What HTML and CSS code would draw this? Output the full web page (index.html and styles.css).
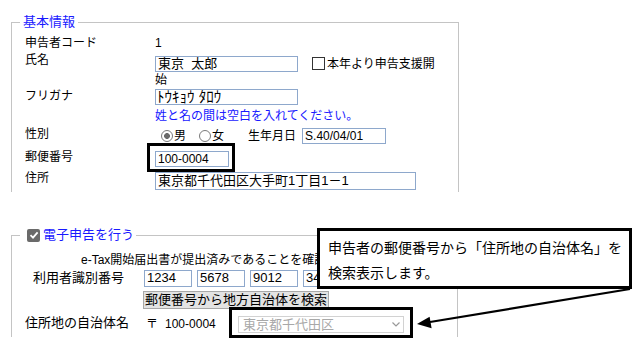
FILE: index.html
```html
<!DOCTYPE html>
<html lang="ja">
  <head>
    <meta charset="UTF-8" />
    <title>申告者情報</title>
    <link rel="stylesheet" href="styles.css">
  </head>
  <body>
    <div class="page">
      <fieldset class="box basic">
        <legend>基本情報</legend>
        <div class="row r-code">
          <span class="lbl">申告者コード</span>
          <div class="fld">1</div>
        </div>
        <div class="row r-name">
          <span class="lbl">氏名</span>
          <div class="fld"><span class="txt w-name">東京&nbsp;&nbsp;太郎</span><span class="chk"></span>本年より申告支援開始</div>
        </div>
        <div class="row r-kana">
          <span class="lbl">フリガナ</span>
          <div class="fld"><span class="txt w-name kana">ﾄｳｷｮｳ ﾀﾛｳ</span></div>
        </div>
        <div class="row r-note">
          <span class="lbl"></span>
          <div class="fld note">姓と名の間は空白を入れてください。</div>
        </div>
        <div class="row r-sex">
          <span class="lbl">性別</span>
          <div class="fld">
            <span class="radio on"></span>男
            <span class="radio"></span>女
            <span class="birth">生年月日</span><span class="txt w-birth">S.40/04/01</span>
          </div>
        </div>
        <div class="row r-zip">
          <span class="lbl">郵便番号</span>
          <div class="fld"><span class="mark mark-zip"><span class="txt w-zip">100-0004</span></span></div>
        </div>
        <div class="row r-addr">
          <span class="lbl">住所</span>
          <div class="fld"><span class="txt w-addr">東京都千代田区大手町1丁目1－1</span></div>
        </div>
      </fieldset>

      <fieldset class="box etax">
        <legend><span class="chk on"><svg viewBox="0 0 12 12" width="12" height="12"><path d="M2.5 6.2 L5 8.6 L9.6 3.4" fill="none" stroke="#fff" stroke-width="1.8"/></svg></span>電子申告を行う</legend>
        <div class="etax-note">e-Tax開始届出書が提出済みであることを確認してください。</div>
        <div class="row r-ids">
          <span class="lbl">利用者識別番号</span>
          <div class="fld">
            <span class="txt w-id">1234</span><span class="txt w-id">5678</span><span class="txt w-id">9012</span><span class="txt w-id">3456</span>
          </div>
        </div>
        <div class="row r-btn">
          <span class="lbl"></span>
          <div class="fld"><button type="button">郵便番号から地方自治体を検索</button></div>
        </div>
        <div class="row r-city">
          <span class="lbl">住所地の自治体名</span>
          <div class="fld">
            <span class="zip-mark">〒</span><span class="zip-no">100-0004</span>
            <span class="mark mark-city"><span class="select">東京都千代田区<svg class="chev" viewBox="0 0 8 5" width="8" height="5"><path d="M0.5 0.5 L4 4 L7.5 0.5" fill="none" stroke="#999" stroke-width="1.2"/></svg></span></span>
          </div>
        </div>
      </fieldset>

      <div class="callout">申告者の郵便番号から「住所地の自治体名」を<br>検索表示します。</div>
      <svg class="arrow" width="637" height="352" viewBox="0 0 637 352">
        <line x1="630" y1="289" x2="430" y2="322" stroke="#000" stroke-width="2.2"/>
        <polygon points="417,324 431.6,328.2 429.6,316.8" fill="#000"/>
      </svg>
    </div>
  </body>
</html>
```

FILE: styles.css
```css
body {
  margin: 0;
  background-color: #fff;
}

.page {
  position: relative;
  width: 637px;
  height: 352px;
  overflow: hidden;
  font-family: "Liberation Sans", "Noto Sans CJK JP", sans-serif;
  font-size: 12px;
  color: #000;
}

/* fieldsets */
.box {
  width: 448px;
  box-sizing: border-box;
  margin: 0 0 0 11px;
  border: 1px solid #c4c4c4;
  border-bottom: none;
  padding: 0 14px 2px 13px;
}

.box legend {
  margin-left: -5px;
  padding: 0 3px;
  font-size: 13px;
  line-height: 16px;
  color: #1919ff;
}

.basic {
  margin-top: 14px;
  height: 178px;
}

.etax {
  margin-top: 35px;
  width: 447px;
}

.etax legend {
  display: flex;
  align-items: center;
  padding: 0 2px 0 3px;
}

/* rows */
.row {
  display: flex;
  align-items: flex-start;
}

.lbl {
  flex: none;
  width: 130px;
  line-height: 16px;
  white-space: nowrap;
}

.fld {
  flex: 1;
  line-height: 16px;
}

.r-code {
  margin-top: 5px;
  height: 17px;
}

.r-name {
  height: 36px;
}

.r-name .fld {
  padding-top: 4px;
  padding-right: 2px;
}

.r-kana {
  height: 17px;
}

.r-kana .fld {
  padding-top: 1px;
}

.r-note {
  height: 19px;
}

.note {
  padding-top: 3px;
  color: #1919ff;
}

.r-sex {
  height: 20px;
}

.r-sex .lbl {
  padding-top: 2px;
}

.r-sex .fld {
  display: flex;
  align-items: center;
  padding-top: 4px;
}

.r-zip {
  height: 23px;
}

.r-zip .lbl {
  padding-top: 5px;
}

.r-zip .fld {
  padding-top: 7px;
}

.r-addr .lbl {
  padding-top: 3px;
}

.r-addr .fld {
  padding-top: 5px;
}

/* text boxes */
.txt {
  display: inline-block;
  box-sizing: border-box;
  height: 16px;
  border: 1px solid #8ea8cc;
  padding: 0 2px;
  line-height: 14px;
  vertical-align: top;
  white-space: nowrap;
  overflow: hidden;
  background-color: #fff;
}

.w-name {
  width: 143px;
  margin-right: 14px;
  font-size: 13px;
}

.kana {
  padding-left: 1px;
  font-size: 15px;
}

.w-birth {
  width: 84px;
}

.w-zip {
  width: 74px;
}

.w-addr {
  width: 261px;
  height: 18px;
  line-height: 16px;
  font-size: 13px;
}

.w-id {
  width: 48px;
  height: 17px;
  margin-right: 5px;
  font-size: 13px;
}

/* checkbox and radio */
.chk {
  display: inline-block;
  box-sizing: border-box;
  width: 13px;
  height: 13px;
  margin: 1px 2px 0 0;
  border: 1px solid #333;
  vertical-align: top;
  background-color: #fff;
}

.chk.on {
  display: inline-flex;
  align-items: center;
  justify-content: center;
  margin: 0 3px 0 4px;
  border: none;
  border-radius: 2px;
  background-color: #6a6a6a;
}

.radio {
  display: inline-block;
  box-sizing: border-box;
  width: 12px;
  height: 12px;
  margin: 0 1px 0 6px;
  border: 1px solid #7a7a7a;
  border-radius: 50%;
  background-color: #fff;
}

.r-sex .radio:nth-of-type(2) {
  margin-left: 13px;
}

.radio.on {
  background: radial-gradient(circle, #6a6a6a 0 2.6px, #fff 3.2px);
}

.birth {
  margin: 0 6px 0 24px;
}

/* e-Tax block */
.etax-note {
  margin: 9px 0 0 56px;
  line-height: 16px;
  white-space: nowrap;
}

.etax .lbl {
  width: 119px;
  font-size: 13px;
}

.r-ids .lbl {
  padding: 2px 0 0 8px;
  width: 111px;
}

.r-ids .fld {
  padding-top: 2px;
  white-space: nowrap;
}

.r-btn .fld {
  padding-top: 4px;
}

button {
  box-sizing: border-box;
  height: 18px;
  width: 186px;
  margin-left: -1px;
  padding: 0;
  border: 1px solid #a8a8a8;
  background-color: #e3e3e3;
  font-family: "Liberation Sans", "Noto Sans CJK JP", sans-serif;
  font-size: 13px;
  line-height: 16px;
  color: #000;
}

.r-city .lbl {
  padding-top: 6px;
}

.r-city .fld {
  display: flex;
  align-items: flex-start;
  padding-top: 7px;
  height: 19px;
}

.zip-mark {
  margin: 0 7px 0 2px;
  line-height: 17px;
}

.zip-no {
  width: 73px;
  line-height: 17px;
}

.select {
  display: flex;
  align-items: center;
  justify-content: space-between;
  box-sizing: border-box;
  width: 166px;
  height: 17px;
  padding: 0 3px 0 4px;
  border: 1px solid #d2d2d2;
  font-size: 13px;
  color: #a8a8a8;
  background-color: #fff;
}

/* annotation overlays */
.mark {
  position: relative;
  display: inline-block;
}

.mark::after {
  content: "";
  position: absolute;
  border: 3px solid #000;
}

.mark-zip::after {
  top: -8px;
  left: -8px;
  right: -6px;
  bottom: -5px;
}

.mark-city::after {
  top: -9px;
  left: -9px;
  right: -9px;
  bottom: -5px;
}

.callout {
  position: absolute;
  left: 317px;
  top: 228px;
  width: 315px;
  height: 61px;
  box-sizing: border-box;
  border: 3px solid #000;
  padding: 5px 0 0 8px;
  background-color: #fff;
  font-size: 14px;
  line-height: 25px;
  white-space: nowrap;
}

.arrow {
  position: absolute;
  left: 0;
  top: 0;
  pointer-events: none;
}
```
